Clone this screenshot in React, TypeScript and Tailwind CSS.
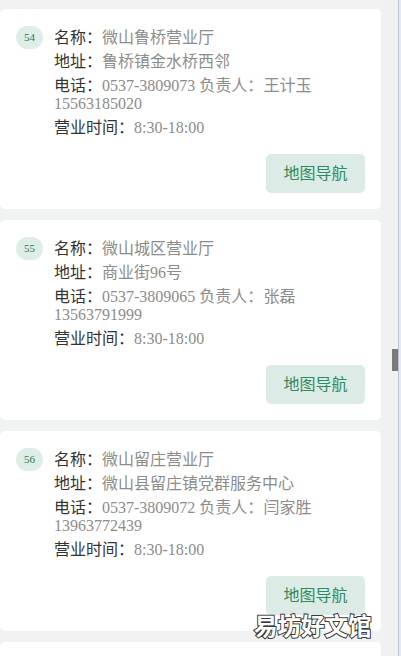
const stores = [
  {
    no: "54",
    name: "微山鲁桥营业厅",
    addr: "鲁桥镇金水桥西邻",
    tel: "0537-3809073",
    boss: "王计玉",
    mobile: "15563185020",
    hours: "8:30-18:00",
  },
  {
    no: "55",
    name: "微山城区营业厅",
    addr: "商业街96号",
    tel: "0537-3809065",
    boss: "张磊",
    mobile: "13563791999",
    hours: "8:30-18:00",
  },
  {
    no: "56",
    name: "微山留庄营业厅",
    addr: "微山县留庄镇党群服务中心",
    tel: "0537-3809072",
    boss: "闫家胜",
    mobile: "13963772439",
    hours: "8:30-18:00",
  },
];

function Field({ label, children }: { label: string; children: React.ReactNode }) {
  return (
    <p className="leading-[18px]">
      <span className="text-[#333333]">{label}：</span>
      <span className="text-[#8c8c8c]">{children}</span>
    </p>
  );
}

function StoreCard({ s }: { s: (typeof stores)[number] }) {
  return (
    <div className="h-[200px] shrink-0 bg-white rounded-[5px] pt-[20px] pr-4 pb-4 flex flex-col">
      <div className="flex">
        <div className="w-[54px] shrink-0 pl-4">
          <div className="w-[27px] h-[23px] -mt-[3px] rounded-full bg-[#deede7] flex items-center justify-center text-[11px] text-[#2a7a55]">
            {s.no}
          </div>
        </div>
        <div className="flex-1 flex flex-col gap-[6px] text-[16px]">
          <Field label="名称">{s.name}</Field>
          <Field label="地址">{s.addr}</Field>
          <Field label="电话">
            {s.tel} 负责人：{s.boss} {s.mobile}
          </Field>
          <Field label="营业时间">{s.hours}</Field>
        </div>
      </div>
      <div className="mt-auto flex justify-end">
        <button className="w-[99px] h-[39px] rounded-[5px] bg-[#dcebe5] text-[#2e8a5f] text-[16px]">
          地图导航
        </button>
      </div>
    </div>
  );
}

export default function App() {
  return (
    <div
      className="relative w-[401px] h-[656px] overflow-hidden bg-[#f1f2f2] flex"
      style={{ fontFamily: '"Liberation Serif", "Noto Sans CJK SC", serif' }}
    >
      <div className="w-[381px] pt-[9px] flex flex-col gap-[11px]">
        {stores.map((s) => (
          <StoreCard key={s.no} s={s} />
        ))}
        <div className="h-[40px] shrink-0 bg-white rounded-[5px]" />
      </div>

      {/* scrollbar */}
      <div className="w-[17px] bg-[#f0f1f1]">
        <div className="ml-[11px] mt-[349px] w-[6px] h-[22px] bg-[#7a7a7a]" />
      </div>
      <div className="w-[3px] border-l border-[#b9c3d1] bg-[#e6eaef]" />

      <div
        className="absolute left-[254px] top-[609px] text-[23.5px] leading-[32px] font-bold text-white [-webkit-text-stroke:2px_#3a3a3a] [paint-order:stroke_fill]"
        style={{ fontFamily: '"Noto Sans CJK SC", sans-serif' }}
      >
        易坊好文馆
      </div>
    </div>
  );
}
